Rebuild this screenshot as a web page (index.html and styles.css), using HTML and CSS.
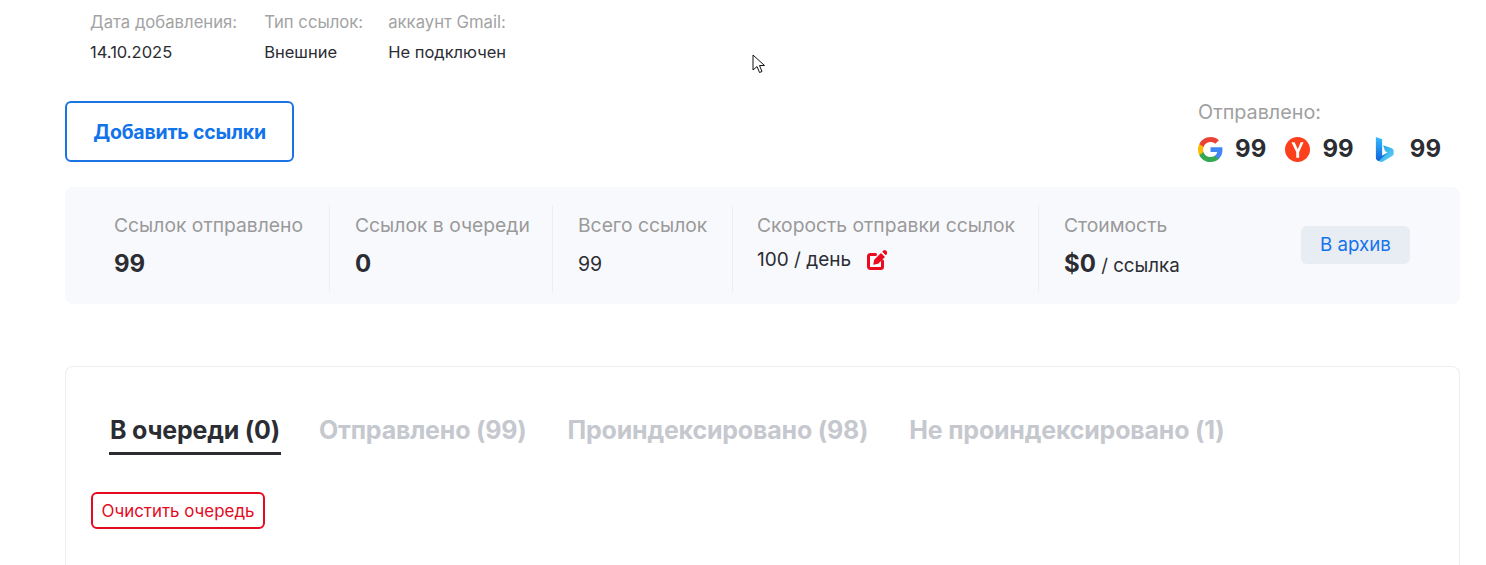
FILE: index.html
```html
<!DOCTYPE html>
<html lang="ru">
<head>
<meta charset="utf-8">
<title>Проект</title>
<link rel="stylesheet" href="styles.css">
</head>
<body>
<main class="page">
  <section class="meta">
    <div class="meta-item meta-first"><div class="meta-label">Дата добавления:</div><div class="meta-value">14.10.2025</div></div>
    <div class="meta-item"><div class="meta-label">Тип ссылок:</div><div class="meta-value">Внешние</div></div>
    <div class="meta-item"><div class="meta-label">аккаунт Gmail:</div><div class="meta-value">Не подключен</div></div>
  </section>
  <section class="actions">
    <button class="btn-add">Добавить ссылки</button>
    <div class="sent">
      <div class="sent-label">Отправлено:</div>
      <div class="sent-row">
        <span class="engine">
          <svg class="engine-icon" viewBox="0 0 48 48"><path fill="#4285F4" d="M47 24.500c0-1.700-.15-3.300-.43-4.800H24v9.100h12.900c-.56 3-2.250 5.500-4.800 7.200v6h7.750C44.400 37.800 47 31.700 47 24.500z"/><path fill="#34A853" d="M24 48c6.500 0 11.900-2.150 15.850-5.800l-7.750-6c-2.150 1.440-4.900 2.300-8.100 2.300-6.250 0-11.550-4.200-13.450-9.900h-8v6.200C6.500 42.700 14.600 48 24 48z"/><path fill="#FBBC05" d="M10.550 28.600c-.48-1.440-.75-3-.75-4.600s.27-3.160.75-4.600v-6.200h-8C.92 16.400 0 20.100 0 24s.92 7.600 2.550 10.800l8-6.200z"/><path fill="#EA4335" d="M24 9.500c3.500 0 6.700 1.200 9.200 3.600l6.900-6.900C35.900 2.300 30.500 0 24 0 14.600 0 6.500 5.300 2.550 13.200l8 6.200C12.450 13.700 17.750 9.500 24 9.500z"/></svg>
          <span>99</span>
        </span>
        <span class="engine">
          <svg class="engine-icon" viewBox="0 0 26 26"><circle cx="13" cy="13" r="13" fill="#FC3F1D"/><path fill="#fff" d="M14.700 21.500h-3v-6L6.700 5.500h3.300l3.300 7.200 3-7.200h3L14.700 15.500z"/></svg>
          <span>99</span>
        </span>
        <span class="engine">
          <svg class="engine-icon" viewBox="0 0 26 26"><defs><linearGradient id="bing-a" x1="0" y1="0" x2="0" y2="1"><stop offset="0" stop-color="#37BDFF"/><stop offset="1" stop-color="#0F5FD8"/></linearGradient><linearGradient id="bing-b" x1="0" y1="0" x2="1" y2="1"><stop offset="0" stop-color="#1B9DE2"/><stop offset="1" stop-color="#63D5F5"/></linearGradient></defs><path fill="url(#bing-b)" d="M10.500 8.500L19 11.500c2 .8 2.500 2 2.500 3.500v2.500c0 1-.5 1.700-1.500 2.300l-9.500 5.700c-2 1-4.500.5-7.500-3.500l6.500-2.500 5.500-3.500-2.500-1.500z"/><path fill="url(#bing-a)" d="M3 0l6.500 2.300v17.200l5.500-3-9 8.500c-2-.5-3-2-3-3.500z"/></svg>
          <span>99</span>
        </span>
      </div>
    </div>
  </section>
  <section class="stats">
    <div class="stat stat-a"><div class="stat-label">Ссылок отправлено</div><div class="stat-big">99</div></div>
    <div class="stat stat-b"><div class="stat-label">Ссылок в очереди</div><div class="stat-big">0</div></div>
    <div class="stat stat-c"><div class="stat-label">Всего ссылок</div><div class="stat-plain">99</div></div>
    <div class="stat stat-d"><div class="stat-label">Скорость отправки ссылок</div>
      <div class="stat-speed"><span>100 / день</span>
        <svg class="edit-icon" viewBox="0 0 20 21"><path fill="none" stroke="#EC0A1E" stroke-width="3" stroke-linecap="round" stroke-linejoin="round" d="M8.500 5.500H3.200a1.700 1.700 0 0 0-1.700 1.700v10.600a1.700 1.700 0 0 0 1.700 1.700h10.600a1.700 1.700 0 0 0 1.700-1.700V12"/><path fill="#EC0A1E" d="M6.200 15.800l1-5L14 4l4 4-6.800 6.800zM15.200 2.800l1.200-1.200a1.800 1.800 0 0 1 2.500 0l1 1a1.800 1.800 0 0 1 0 2.500l-1.200 1.200z"/></svg>
      </div>
    </div>
    <div class="stat stat-e"><div class="stat-label">Стоимость</div><div class="stat-cost"><b>$0</b> / ссылка</div></div>
    <button class="btn-archive">В архив</button>
  </section>
  <section class="card">
    <nav class="tabs">
      <span class="tab tab-active">В очереди (0)</span>
      <span class="tab">Отправлено (99)</span>
      <span class="tab">Проиндексировано (98)</span>
      <span class="tab">Не проиндексировано (1)</span>
    </nav>
    <button class="btn-clear">Очистить очередь</button>
  </section>
</main>
<svg class="cursor" viewBox="0 0 14 21"><path fill="#fff" stroke="#111" stroke-width="1" d="M1 1v15l4-3.500 2.500 6 2.500-1-2.500-6H12.500z"/></svg>
</body>
</html>
```
FILE: styles.css
```css
* { box-sizing: border-box; }
html, body { margin: 0; padding: 0; height: 565px; overflow: hidden; background: #fff; }
body { font-family: Inter, "Noto Sans", sans-serif; color: #2b2d33; position: relative; }
button { font-family: inherit; cursor: pointer; background: none; }
.page { padding: 0 26px 0 65px; }

.meta { display: flex; gap: 25px; padding: 12px 0 0 25px; height: 101px; }
.meta-first { padding-right: 2px; }
.meta-label { font-size: 16.700px; line-height: 20px; color: #a3a3a3; white-space: nowrap; }
.meta-value { font-size: 16.500px; line-height: 20px; margin-top: 10px; color: #2b2d33; white-space: nowrap; }

.actions { display: flex; justify-content: space-between; height: 86px; }
.btn-add { width: 229px; height: 61px; border: 2px solid #1b74e4; border-radius: 6px; color: #1273eb; font-size: 19.500px; font-weight: 700; letter-spacing: -0.2px; padding: 0; }
.sent { width: 262px; }
.sent-label { font-size: 19.800px; line-height: 22px; color: #a0a0a0; }
.sent-row { display: flex; gap: 19px; margin-top: 12px; }
.engine { display: flex; align-items: center; gap: 12px; font-size: 24px; font-weight: 700; line-height: 28px; color: #2b2d33; letter-spacing: 0.1px; }
.engine-icon { width: 25px; height: 25px; display: block; }

.stats { display: flex; align-items: stretch; height: 117px; background: #f8f9fc; border-radius: 8px; padding: 18px 50px 12px 0; }
.stat { border-right: 1px solid #eceef2; padding: 7px 0 0 25px; }
.stat-a { width: 265px; padding-left: 49px; }
.stat-b { width: 223px; }
.stat-c { width: 180px; }
.stat-d { width: 306px; padding-left: 24px; }
.stat-e { border-right: 0; flex: 1; }
.stat-label { font-size: 19.300px; line-height: 26px; color: #9a9a9a; white-space: nowrap; }
.stat-big { font-size: 24px; font-weight: 700; line-height: 32px; margin-top: 10px; color: #2b2d33; }
.stat-plain { font-size: 19.500px; line-height: 26px; margin-top: 13px; color: #2b2d33; }
.stat-speed { display: flex; align-items: center; gap: 16px; font-size: 19px; line-height: 26px; margin-top: 9px; color: #2b2d33; }
.edit-icon { width: 20px; height: 21px; margin-top: -2px; }
.stat-cost { font-size: 18.700px; line-height: 32px; margin-top: 10px; color: #2b2d33; }
.stat-cost b { font-size: 24px; font-weight: 700; }
.btn-archive { align-self: center; width: 109px; height: 38px; margin-top: -8px; border: 0; border-radius: 6px; background: #e8ecf3; color: #1273eb; font-size: 18.700px; padding: 0; }

.card { margin-top: 62px; height: 199px; border: 1px solid #eeeeee; border-bottom: 0; border-radius: 8px 8px 0 0; padding: 45px 0 0 25px; }
.tabs { display: flex; gap: 39px; padding-left: 18px; }
.tab { font-size: 25px; font-weight: 700; line-height: 36px; height: 43px; color: #c5c8ce; white-space: nowrap; letter-spacing: -0.2px; padding: 0 1px; }
.tab-active { color: #2b2d33; border-bottom: 3px solid #2b2d33; margin-right: -2px; }
.btn-clear { display: block; margin-top: 37px; width: 174px; height: 37px; border: 2px solid #e30b1f; border-radius: 6px; color: #e30b1f; font-size: 16.900px; padding: 0; white-space: nowrap; }

.cursor { position: absolute; left: 752px; top: 54px; width: 14px; height: 21px; }
```
